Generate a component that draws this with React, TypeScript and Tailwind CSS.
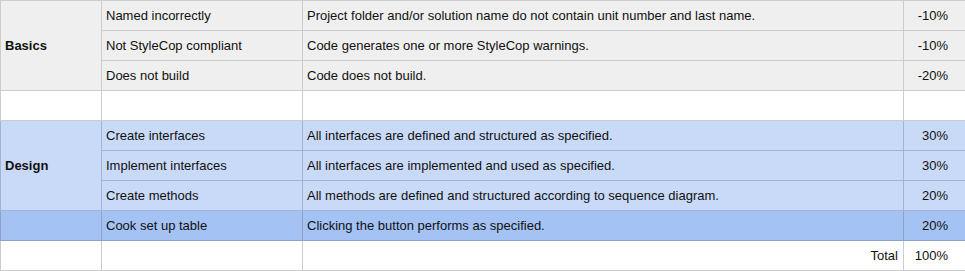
import React from 'react';

type Row = {
  criterion: string;
  description: string;
  value: string;
};

const basics: Row[] = [
  { criterion: 'Named incorrectly', description: 'Project folder and/or solution name do not contain unit number and last name.', value: '-10%' },
  { criterion: 'Not StyleCop compliant', description: 'Code generates one or more StyleCop warnings.', value: '-10%' },
  { criterion: 'Does not build', description: 'Code does not build.', value: '-20%' },
];

const design: Row[] = [
  { criterion: 'Create interfaces', description: 'All interfaces are defined and structured as specified.', value: '30%' },
  { criterion: 'Implement interfaces', description: 'All interfaces are implemented and used as specified.', value: '30%' },
  { criterion: 'Create methods', description: 'All methods are defined and structured according to sequence diagram.', value: '20%' },
];

const cell = 'h-[30px] p-0 align-middle';
const gray = 'border border-[#cccccc]';
const blue = 'border border-[#a2b3d3]';

export default function App() {
  return (
    <div className="w-[965px] h-[271px] bg-white font-['Liberation_Sans',Arial,sans-serif] text-[13px] text-[#111]">
      <table className="table-fixed border-collapse w-[965px]">
        <colgroup>
          <col className="w-[101px]" />
          <col className="w-[201px]" />
          <col className="w-[601px]" />
          <col className="w-[62px]" />
        </colgroup>
        <tbody>
          {basics.map((row, i) => (
            <tr key={row.criterion} className="bg-[#efefef]">
              {i === 0 && (
                <td rowSpan={3} className={`${cell} ${gray} pl-1 font-bold`}>
                  Basics
                </td>
              )}
              <td className={`${cell} ${gray} pl-1`}>{row.criterion}</td>
              <td className={`${cell} ${gray} pl-1`}>{row.description}</td>
              <td className={`${cell} ${gray} pr-[17px] text-right`}>{row.value}</td>
            </tr>
          ))}
          <tr>
            <td className={`${cell} ${gray}`}></td>
            <td className={`${cell} ${gray}`}></td>
            <td className={`${cell} ${gray}`}></td>
            <td className={`${cell} ${gray}`}></td>
          </tr>
          {design.map((row, i) => (
            <tr key={row.criterion} className="bg-[#c9daf8]">
              {i === 0 && (
                <td rowSpan={3} className={`${cell} ${blue} pl-1 font-bold`}>
                  Design
                </td>
              )}
              <td className={`${cell} ${blue} pl-1`}>{row.criterion}</td>
              <td className={`${cell} ${blue} pl-1`}>{row.description}</td>
              <td className={`${cell} ${blue} pr-[17px] text-right`}>{row.value}</td>
            </tr>
          ))}
          <tr className="bg-[#a4c2f4]">
            <td className={`${cell} border border-[#8da3cb]`}></td>
            <td className={`${cell} border border-[#8da3cb] pl-1`}>Cook set up table</td>
            <td className={`${cell} border border-[#8da3cb] pl-1`}>Clicking the button performs as specified.</td>
            <td className={`${cell} border border-[#8da3cb] pr-[17px] text-right`}>20%</td>
          </tr>
          <tr>
            <td className={`${cell} ${gray}`}></td>
            <td className={`${cell} ${gray}`}></td>
            <td className={`${cell} ${gray} pr-[5px] text-right`}>Total</td>
            <td className={`${cell} ${gray} pr-[17px] text-right`}>100%</td>
          </tr>
        </tbody>
      </table>
    </div>
  );
}
